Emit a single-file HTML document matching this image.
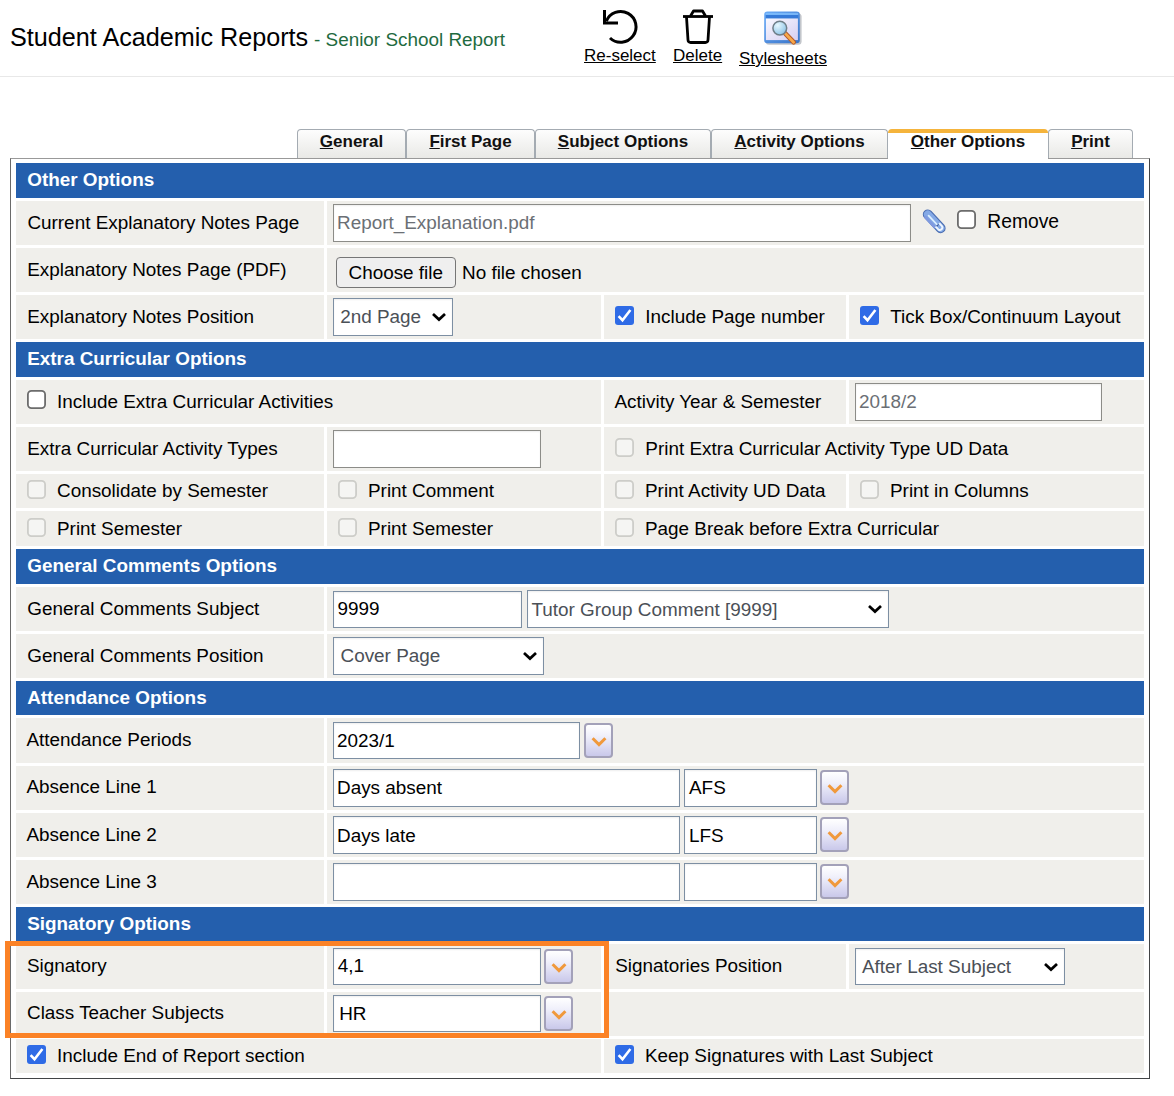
<!DOCTYPE html><html><head><meta charset="utf-8"><style>
html,body{margin:0;padding:0;background:#fff;width:1174px;height:1096px;overflow:hidden;position:relative;font-family:"Liberation Sans",sans-serif}
div,span,svg{position:absolute;box-sizing:content-box}
.t{white-space:nowrap}
.cb{width:17px;height:17px;border-radius:3px}
.cb.on{width:19px;height:19px;background:#2f6be6}
.cb.on svg{position:absolute;left:0;top:0}
.cb.off{border:2px solid #6f6f6f;background:#fff;width:15px;height:15px}
.cb.dis{border:2px solid #d2d2ce;background:#f5f5f3;width:15px;height:15px}
.inp{border:1px solid #7d8fa3;background:#fff;box-shadow:inset 0 1px 2px rgba(0,0,0,0.07)}
.btn{border:1px solid #767676;border-radius:4px;background:#efefef}
.dd{border:2px solid #a3a1b9;border-radius:4px;background:linear-gradient(#ffffff 0%,#f0f0fb 35%,#c9c8ea 100%)}
.tab{border:1px solid #a4abb2;border-bottom:none;border-radius:4px 4px 0 0;background:linear-gradient(#fdfdfd,#e9e9e6)}
.tab.act{border:none;border-top:4px solid #f5b43c;border-radius:4px 4px 0 0;background:#fff;height:26px}
</style></head><body>
<span class="t" style="left:10px;top:25px;font-size:25.2px;line-height:25.2px;font-weight:400;color:#000;">Student Academic Reports</span>
<span class="t" style="left:314px;top:31px;font-size:18.9px;line-height:18.9px;font-weight:400;color:#1f6b3f;">- Senior School Report</span>
<div style="left:0px;top:76px;width:1174px;height:1px;background:#e8e8e8;"></div>
<svg style="position:absolute;left:0;top:0" width="1174" height="76">
<path d="M604.5 10 V23 H618" fill="none" stroke="#000" stroke-width="3"/>
<path d="M606.3 21.2 A15.4 15.4 0 1 1 610 38" fill="none" stroke="#000" stroke-width="3"/>
<path d="M683 16.5 H713" stroke="#000" stroke-width="2.8"/>
<path d="M690.5 16 L693.5 11 H702.5 L705.5 16" fill="none" stroke="#000" stroke-width="2.8" stroke-linejoin="round"/>
<path d="M686.5 17 L688 40 Q688.2 42.5 690.7 42.5 H705.3 Q707.8 42.5 708 40 L709.5 17" fill="none" stroke="#000" stroke-width="2.8"/>
</svg>
<svg style="position:absolute;left:762px;top:10px" width="42" height="38" viewBox="0 0 42 38">
<defs><linearGradient id="gin" x1="0" y1="0" x2="1" y2="1"><stop offset="0" stop-color="#f8f8ff"/><stop offset="1" stop-color="#d6cff2"/></linearGradient>
<linearGradient id="gfr" x1="0" y1="0" x2="1" y2="1"><stop offset="0" stop-color="#6aacf8"/><stop offset="1" stop-color="#3a74c8"/></linearGradient>
<radialGradient id="lens" cx="0.35" cy="0.3" r="0.75"><stop offset="0" stop-color="#e6f8ff"/><stop offset="1" stop-color="#8cc2e6"/></radialGradient></defs>
<rect x="3.6" y="3.2" width="36" height="31.5" rx="3.5" fill="rgba(40,50,70,0.28)"/>
<rect x="2.2" y="1.6" width="35.6" height="31.6" rx="3.2" fill="url(#gfr)"/>
<rect x="3.8" y="3.3" width="32.4" height="1.6" fill="#86c4ff"/>
<rect x="3.8" y="4.9" width="32.4" height="3.6" fill="#357ad8"/>
<rect x="3.9" y="8.5" width="32" height="21.6" fill="url(#gin)"/>
<line x1="23.4" y1="23.6" x2="31.6" y2="32.2" stroke="#b35a2a" stroke-width="4.8" stroke-linecap="round"/>
<line x1="23.4" y1="23.6" x2="31.6" y2="32.2" stroke="#f7a84a" stroke-width="2.8" stroke-linecap="round"/>
<circle cx="17.8" cy="18.1" r="6.9" fill="url(#lens)" stroke="#6f7e88" stroke-width="1.5"/>
</svg>
<span class="t" style="left:584px;top:47px;font-size:17px;line-height:17px;font-weight:400;color:#000;text-decoration:underline;">Re-select</span>
<span class="t" style="left:673px;top:47px;font-size:17px;line-height:17px;font-weight:400;color:#000;text-decoration:underline;">Delete</span>
<span class="t" style="left:739px;top:50px;font-size:17px;line-height:17px;font-weight:400;color:#000;text-decoration:underline;">Stylesheets</span>
<div style="left:10px;top:158px;width:1138px;height:919px;border:1px solid;border-color:#999 #424446 #424446 #6a6a6a;background:#fff"></div>
<div class="tab" style="left:297px;top:129px;width:107px;height:28px"></div>
<span class="t" style="left:297px;width:109px;text-align:center;top:133px;font-size:17px;line-height:17px;font-weight:bold;color:#111"><u>G</u>eneral</span>
<div class="tab" style="left:406px;top:129px;width:127px;height:28px"></div>
<span class="t" style="left:406px;width:129px;text-align:center;top:133px;font-size:17px;line-height:17px;font-weight:bold;color:#111"><u>F</u>irst Page</span>
<div class="tab" style="left:535px;top:129px;width:174px;height:28px"></div>
<span class="t" style="left:535px;width:176px;text-align:center;top:133px;font-size:17px;line-height:17px;font-weight:bold;color:#111"><u>S</u>ubject Options</span>
<div class="tab" style="left:711px;top:129px;width:175px;height:28px"></div>
<span class="t" style="left:711px;width:177px;text-align:center;top:133px;font-size:17px;line-height:17px;font-weight:bold;color:#111"><u>A</u>ctivity Options</span>
<div class="tab act" style="left:888px;top:129px;width:160px;height:30px"></div>
<span class="t" style="left:888px;width:160px;text-align:center;top:133px;font-size:17px;line-height:17px;font-weight:bold;color:#111"><u>O</u>ther Options</span>
<div class="tab" style="left:1048px;top:129px;width:83px;height:28px"></div>
<span class="t" style="left:1048px;width:85px;text-align:center;top:133px;font-size:17px;line-height:17px;font-weight:bold;color:#111"><u>P</u>rint</span>
<div style="left:16px;top:163px;width:1128px;height:35px;background:#245fad;"></div>
<span class="t" style="left:27.2px;top:171px;font-size:18.9px;line-height:18.9px;font-weight:700;color:#fff;">Other Options</span>
<div style="left:16px;top:201px;width:308px;height:44px;background:#f0efeb;"></div>
<div style="left:327px;top:201px;width:817px;height:44px;background:#f0efeb;"></div>
<span class="t" style="left:27.4px;top:214px;font-size:18.9px;line-height:18.9px;font-weight:400;color:#000;">Current Explanatory Notes Page</span>
<div class="inp" style="left:333px;top:204px;width:576px;height:36px;border-color:#8c8c88"></div>
<span class="t" style="left:337px;top:214px;font-size:18.9px;line-height:18.9px;font-weight:400;color:#6b6f75;">Report_Explanation.pdf</span>
<svg style="position:absolute;left:920px;top:207px" width="30" height="30" viewBox="0 0 30 30">
<line x1="7.8" y1="7.4" x2="20.6" y2="21.2" stroke="#4a6db0" stroke-width="10" stroke-linecap="round"/>
<line x1="7.8" y1="7.4" x2="20.6" y2="21.2" stroke="#84a9e6" stroke-width="7.8" stroke-linecap="round"/>
<line x1="5.6" y1="10.2" x2="14.5" y2="19.8" stroke="#7f9ae0" stroke-width="3" stroke-linecap="round"/>
<line x1="8.6" y1="8.6" x2="17.4" y2="18" stroke="#dcefff" stroke-width="1.8" stroke-linecap="round"/>
<path d="M15.6 19.5 L18.3 22.4 A2.5 2.5 0 0 0 21.9 19.0 L19.2 16.1" fill="none" stroke="#eef6ff" stroke-width="1.9"/>
<path d="M18.6 17.4 L16.6 19.3" fill="none" stroke="#3d5c9c" stroke-width="1.3"/>
</svg>
<svg style="left:957px;top:210px" width="19" height="19"><rect x="0.9" y="0.9" width="17.2" height="17.2" rx="3.6" fill="#fff" stroke="#6c6c6c" stroke-width="1.8"/></svg>
<span class="t" style="left:987.3px;top:212px;font-size:19.3px;line-height:19.3px;font-weight:400;color:#000;">Remove</span>
<div style="left:16px;top:248px;width:308px;height:44px;background:#f0efeb;"></div>
<div style="left:327px;top:248px;width:817px;height:44px;background:#f0efeb;"></div>
<span class="t" style="left:27.2px;top:261px;font-size:18.9px;line-height:18.9px;font-weight:400;color:#000;">Explanatory Notes Page (PDF)</span>
<div class="btn" style="left:336px;top:257px;width:118px;height:29px"></div>
<span class="t" style="left:348.5px;top:264px;font-size:18.9px;line-height:18.9px;font-weight:400;color:#000;">Choose file</span>
<span class="t" style="left:462px;top:264px;font-size:18.9px;line-height:18.9px;font-weight:400;color:#000;">No file chosen</span>
<div style="left:16px;top:295px;width:308px;height:44px;background:#f0efeb;"></div>
<div style="left:327px;top:295px;width:274px;height:44px;background:#f0efeb;"></div>
<div style="left:604px;top:295px;width:242px;height:44px;background:#f0efeb;"></div>
<div style="left:849px;top:295px;width:295px;height:44px;background:#f0efeb;"></div>
<span class="t" style="left:27.2px;top:308px;font-size:18.9px;line-height:18.9px;font-weight:400;color:#000;">Explanatory Notes Position</span>
<div class="inp" style="left:333px;top:298px;width:118px;height:36px;border-color:#7d8fa3"></div>
<span class="t" style="left:340.2px;top:308px;font-size:18.9px;line-height:18.9px;font-weight:400;color:#4b5057;">2nd Page</span>
<svg style="position:absolute;left:429.5px;top:311.2px" width="18" height="11.6"><path d="M3 3 L9.0 8.6 L15 3" fill="none" stroke="#000" stroke-width="2.7"/></svg>
<div class="cb on" style="left:615px;top:306px"><svg width="19" height="19" viewBox="0 0 19 19"><path d="M3.6 10.2 L7.5 14.2 L15.4 4" fill="none" stroke="#fff" stroke-width="2.6"/></svg></div>
<span class="t" style="left:645.3px;top:308px;font-size:18.9px;line-height:18.9px;font-weight:400;color:#000;">Include Page number</span>
<div class="cb on" style="left:860px;top:306px"><svg width="19" height="19" viewBox="0 0 19 19"><path d="M3.6 10.2 L7.5 14.2 L15.4 4" fill="none" stroke="#fff" stroke-width="2.6"/></svg></div>
<span class="t" style="left:890.2px;top:308px;font-size:18.9px;line-height:18.9px;font-weight:400;color:#000;">Tick Box/Continuum Layout</span>
<div style="left:16px;top:342px;width:1128px;height:35px;background:#245fad;"></div>
<span class="t" style="left:27.2px;top:350px;font-size:18.9px;line-height:18.9px;font-weight:700;color:#fff;">Extra Curricular Options</span>
<div style="left:16px;top:380px;width:585px;height:44px;background:#f0efeb;"></div>
<div style="left:604px;top:380px;width:242px;height:44px;background:#f0efeb;"></div>
<div style="left:849px;top:380px;width:295px;height:44px;background:#f0efeb;"></div>
<svg style="left:27px;top:390px" width="19" height="19"><rect x="0.9" y="0.9" width="17.2" height="17.2" rx="3.6" fill="#fff" stroke="#6c6c6c" stroke-width="1.8"/></svg>
<span class="t" style="left:57px;top:393px;font-size:18.9px;line-height:18.9px;font-weight:400;color:#000;">Include Extra Curricular Activities</span>
<span class="t" style="left:614.5px;top:393px;font-size:18.9px;line-height:18.9px;font-weight:400;color:#000;">Activity Year &amp; Semester</span>
<div class="inp" style="left:855px;top:383px;width:245px;height:36px;border-color:#8c8c88"></div>
<span class="t" style="left:859px;top:393px;font-size:18.9px;line-height:18.9px;font-weight:400;color:#6b6f75;">2018/2</span>
<div style="left:16px;top:427px;width:308px;height:44px;background:#f0efeb;"></div>
<div style="left:327px;top:427px;width:274px;height:44px;background:#f0efeb;"></div>
<div style="left:604px;top:427px;width:540px;height:44px;background:#f0efeb;"></div>
<span class="t" style="left:27.2px;top:440px;font-size:18.9px;line-height:18.9px;font-weight:400;color:#000;">Extra Curricular Activity Types</span>
<div class="inp" style="left:333px;top:430px;width:206px;height:36px;border-color:#8c8c88"></div>
<svg style="left:615px;top:438px" width="19" height="19"><rect x="0.9" y="0.9" width="17.2" height="17.2" rx="3.6" fill="#f5f5f3" stroke="#cdcdc9" stroke-width="1.8"/></svg>
<span class="t" style="left:645.3px;top:440px;font-size:18.9px;line-height:18.9px;font-weight:400;color:#000;">Print Extra Curricular Activity Type UD Data</span>
<div style="left:16px;top:474px;width:308px;height:34px;background:#f0efeb;"></div>
<div style="left:327px;top:474px;width:274px;height:34px;background:#f0efeb;"></div>
<div style="left:604px;top:474px;width:242px;height:34px;background:#f0efeb;"></div>
<div style="left:849px;top:474px;width:295px;height:34px;background:#f0efeb;"></div>
<svg style="left:27px;top:480px" width="19" height="19"><rect x="0.9" y="0.9" width="17.2" height="17.2" rx="3.6" fill="#f5f5f3" stroke="#cdcdc9" stroke-width="1.8"/></svg>
<span class="t" style="left:57px;top:482px;font-size:18.9px;line-height:18.9px;font-weight:400;color:#000;">Consolidate by Semester</span>
<svg style="left:338px;top:480px" width="19" height="19"><rect x="0.9" y="0.9" width="17.2" height="17.2" rx="3.6" fill="#f5f5f3" stroke="#cdcdc9" stroke-width="1.8"/></svg>
<span class="t" style="left:368px;top:482px;font-size:18.9px;line-height:18.9px;font-weight:400;color:#000;">Print Comment</span>
<svg style="left:615px;top:480px" width="19" height="19"><rect x="0.9" y="0.9" width="17.2" height="17.2" rx="3.6" fill="#f5f5f3" stroke="#cdcdc9" stroke-width="1.8"/></svg>
<span class="t" style="left:645px;top:482px;font-size:18.9px;line-height:18.9px;font-weight:400;color:#000;">Print Activity UD Data</span>
<svg style="left:860px;top:480px" width="19" height="19"><rect x="0.9" y="0.9" width="17.2" height="17.2" rx="3.6" fill="#f5f5f3" stroke="#cdcdc9" stroke-width="1.8"/></svg>
<span class="t" style="left:890px;top:482px;font-size:18.9px;line-height:18.9px;font-weight:400;color:#000;">Print in Columns</span>
<div style="left:16px;top:511px;width:308px;height:35px;background:#f0efeb;"></div>
<div style="left:327px;top:511px;width:274px;height:35px;background:#f0efeb;"></div>
<div style="left:604px;top:511px;width:540px;height:35px;background:#f0efeb;"></div>
<svg style="left:27px;top:518px" width="19" height="19"><rect x="0.9" y="0.9" width="17.2" height="17.2" rx="3.6" fill="#f5f5f3" stroke="#cdcdc9" stroke-width="1.8"/></svg>
<span class="t" style="left:57px;top:520px;font-size:18.9px;line-height:18.9px;font-weight:400;color:#000;">Print Semester</span>
<svg style="left:338px;top:518px" width="19" height="19"><rect x="0.9" y="0.9" width="17.2" height="17.2" rx="3.6" fill="#f5f5f3" stroke="#cdcdc9" stroke-width="1.8"/></svg>
<span class="t" style="left:368px;top:520px;font-size:18.9px;line-height:18.9px;font-weight:400;color:#000;">Print Semester</span>
<svg style="left:615px;top:518px" width="19" height="19"><rect x="0.9" y="0.9" width="17.2" height="17.2" rx="3.6" fill="#f5f5f3" stroke="#cdcdc9" stroke-width="1.8"/></svg>
<span class="t" style="left:645px;top:520px;font-size:18.9px;line-height:18.9px;font-weight:400;color:#000;">Page Break before Extra Curricular</span>
<div style="left:16px;top:549px;width:1128px;height:35px;background:#245fad;"></div>
<span class="t" style="left:27.2px;top:557px;font-size:18.9px;line-height:18.9px;font-weight:700;color:#fff;">General Comments Options</span>
<div style="left:16px;top:587px;width:308px;height:44px;background:#f0efeb;"></div>
<div style="left:327px;top:587px;width:817px;height:44px;background:#f0efeb;"></div>
<span class="t" style="left:27.3px;top:600px;font-size:18.9px;line-height:18.9px;font-weight:400;color:#000;">General Comments Subject</span>
<div class="inp" style="left:333px;top:591px;width:187px;height:35px;border-color:#7d8fa3"></div>
<span class="t" style="left:337.4px;top:600px;font-size:18.9px;line-height:18.9px;font-weight:400;color:#000;">9999</span>
<div class="inp" style="left:527px;top:590px;width:360px;height:36px;border-color:#7d8fa3"></div>
<span class="t" style="left:531.4px;top:601px;font-size:18.9px;line-height:18.9px;font-weight:400;color:#4b5057;">Tutor Group Comment [9999]</span>
<svg style="position:absolute;left:865.5px;top:603.2px" width="18" height="11.6"><path d="M3 3 L9.0 8.6 L15 3" fill="none" stroke="#000" stroke-width="2.7"/></svg>
<div style="left:16px;top:634px;width:308px;height:44px;background:#f0efeb;"></div>
<div style="left:327px;top:634px;width:817px;height:44px;background:#f0efeb;"></div>
<span class="t" style="left:27.3px;top:647px;font-size:18.9px;line-height:18.9px;font-weight:400;color:#000;">General Comments Position</span>
<div class="inp" style="left:333px;top:637px;width:209px;height:36px;border-color:#7d8fa3"></div>
<span class="t" style="left:340.5px;top:647px;font-size:18.9px;line-height:18.9px;font-weight:400;color:#4b5057;">Cover Page</span>
<svg style="position:absolute;left:520.5px;top:650.2px" width="18" height="11.6"><path d="M3 3 L9.0 8.6 L15 3" fill="none" stroke="#000" stroke-width="2.7"/></svg>
<div style="left:16px;top:681px;width:1128px;height:34px;background:#245fad;"></div>
<span class="t" style="left:27.2px;top:689px;font-size:18.9px;line-height:18.9px;font-weight:700;color:#fff;">Attendance Options</span>
<div style="left:16px;top:718px;width:308px;height:45px;background:#f0efeb;"></div>
<div style="left:327px;top:718px;width:817px;height:45px;background:#f0efeb;"></div>
<span class="t" style="left:26.5px;top:731px;font-size:18.9px;line-height:18.9px;font-weight:400;color:#000;">Attendance Periods</span>
<div class="inp" style="left:333px;top:722px;width:245px;height:35px;border-color:#7d8fa3"></div>
<span class="t" style="left:337px;top:732px;font-size:18.9px;line-height:18.9px;font-weight:400;color:#000;">2023/1</span>
<div class="dd" style="left:584px;top:723px;width:25px;height:31px"></div>
<svg style="position:absolute;left:588.5px;top:732.5px" width="20" height="16"><path d="M3.6 5.2 L10 11.6 L16.4 5.2" fill="none" stroke="#f0993c" stroke-width="3"/></svg>
<div style="left:16px;top:766px;width:308px;height:44px;background:#f0efeb;"></div>
<div style="left:327px;top:766px;width:817px;height:44px;background:#f0efeb;"></div>
<span class="t" style="left:26.5px;top:778px;font-size:18.9px;line-height:18.9px;font-weight:400;color:#000;">Absence Line 1</span>
<div class="inp" style="left:333px;top:769px;width:345px;height:36px;border-color:#7d8fa3"></div>
<span class="t" style="left:337px;top:779px;font-size:18.9px;line-height:18.9px;font-weight:400;color:#000;">Days absent</span>
<div class="inp" style="left:684px;top:769px;width:131px;height:36px;border-color:#7d8fa3"></div>
<span class="t" style="left:689px;top:779px;font-size:18.9px;line-height:18.9px;font-weight:400;color:#000;">AFS</span>
<div class="dd" style="left:820px;top:770px;width:25px;height:31px"></div>
<svg style="position:absolute;left:824.5px;top:779.5px" width="20" height="16"><path d="M3.6 5.2 L10 11.6 L16.4 5.2" fill="none" stroke="#f0993c" stroke-width="3"/></svg>
<div style="left:16px;top:813px;width:308px;height:44px;background:#f0efeb;"></div>
<div style="left:327px;top:813px;width:817px;height:44px;background:#f0efeb;"></div>
<span class="t" style="left:26.5px;top:826px;font-size:18.9px;line-height:18.9px;font-weight:400;color:#000;">Absence Line 2</span>
<div class="inp" style="left:333px;top:816px;width:345px;height:36px;border-color:#7d8fa3"></div>
<span class="t" style="left:337px;top:827px;font-size:18.9px;line-height:18.9px;font-weight:400;color:#000;">Days late</span>
<div class="inp" style="left:684px;top:816px;width:131px;height:36px;border-color:#7d8fa3"></div>
<span class="t" style="left:689px;top:827px;font-size:18.9px;line-height:18.9px;font-weight:400;color:#000;">LFS</span>
<div class="dd" style="left:820px;top:817px;width:25px;height:31px"></div>
<svg style="position:absolute;left:824.5px;top:826.5px" width="20" height="16"><path d="M3.6 5.2 L10 11.6 L16.4 5.2" fill="none" stroke="#f0993c" stroke-width="3"/></svg>
<div style="left:16px;top:860px;width:308px;height:44px;background:#f0efeb;"></div>
<div style="left:327px;top:860px;width:817px;height:44px;background:#f0efeb;"></div>
<span class="t" style="left:26.5px;top:873px;font-size:18.9px;line-height:18.9px;font-weight:400;color:#000;">Absence Line 3</span>
<div class="inp" style="left:333px;top:863px;width:345px;height:36px;border-color:#7d8fa3"></div>
<div class="inp" style="left:684px;top:863px;width:131px;height:36px;border-color:#7d8fa3"></div>
<div class="dd" style="left:820px;top:864px;width:25px;height:31px"></div>
<svg style="position:absolute;left:824.5px;top:873.5px" width="20" height="16"><path d="M3.6 5.2 L10 11.6 L16.4 5.2" fill="none" stroke="#f0993c" stroke-width="3"/></svg>
<div style="left:16px;top:907px;width:1128px;height:34px;background:#245fad;"></div>
<span class="t" style="left:27.2px;top:915px;font-size:18.9px;line-height:18.9px;font-weight:700;color:#fff;">Signatory Options</span>
<div style="left:16px;top:944px;width:308px;height:45px;background:#f0efeb;"></div>
<div style="left:327px;top:944px;width:274px;height:45px;background:#f0efeb;"></div>
<div style="left:604px;top:944px;width:242px;height:45px;background:#f0efeb;"></div>
<div style="left:849px;top:944px;width:295px;height:45px;background:#f0efeb;"></div>
<span class="t" style="left:27px;top:957px;font-size:18.9px;line-height:18.9px;font-weight:400;color:#000;">Signatory</span>
<div class="inp" style="left:333px;top:948px;width:206px;height:35px;border-color:#7d8fa3"></div>
<span class="t" style="left:337.7px;top:957px;font-size:18.9px;line-height:18.9px;font-weight:400;color:#000;">4,1</span>
<div class="dd" style="left:544px;top:949px;width:25px;height:31px"></div>
<svg style="position:absolute;left:548.5px;top:958.5px" width="20" height="16"><path d="M3.6 5.2 L10 11.6 L16.4 5.2" fill="none" stroke="#f0993c" stroke-width="3"/></svg>
<span class="t" style="left:615.2px;top:957px;font-size:18.9px;line-height:18.9px;font-weight:400;color:#000;">Signatories Position</span>
<div class="inp" style="left:855px;top:948px;width:208px;height:35px;border-color:#7d8fa3"></div>
<span class="t" style="left:862px;top:958px;font-size:18.9px;line-height:18.9px;font-weight:400;color:#4b5057;">After Last Subject</span>
<svg style="position:absolute;left:1041.5px;top:960.7px" width="18" height="11.6"><path d="M3 3 L9.0 8.6 L15 3" fill="none" stroke="#000" stroke-width="2.7"/></svg>
<div style="left:16px;top:992px;width:308px;height:44px;background:#f0efeb;"></div>
<div style="left:327px;top:992px;width:274px;height:44px;background:#f0efeb;"></div>
<div style="left:604px;top:992px;width:540px;height:44px;background:#f0efeb;"></div>
<span class="t" style="left:27px;top:1004px;font-size:18.9px;line-height:18.9px;font-weight:400;color:#000;">Class Teacher Subjects</span>
<div class="inp" style="left:333px;top:995px;width:206px;height:35px;border-color:#7d8fa3"></div>
<span class="t" style="left:339.2px;top:1005px;font-size:18.9px;line-height:18.9px;font-weight:400;color:#000;">HR</span>
<div class="dd" style="left:544px;top:996px;width:25px;height:31px"></div>
<svg style="position:absolute;left:548.5px;top:1005.5px" width="20" height="16"><path d="M3.6 5.2 L10 11.6 L16.4 5.2" fill="none" stroke="#f0993c" stroke-width="3"/></svg>
<div style="left:16px;top:1039px;width:585px;height:34px;background:#f0efeb;"></div>
<div style="left:604px;top:1039px;width:540px;height:34px;background:#f0efeb;"></div>
<div class="cb on" style="left:27px;top:1045px"><svg width="19" height="19" viewBox="0 0 19 19"><path d="M3.6 10.2 L7.5 14.2 L15.4 4" fill="none" stroke="#fff" stroke-width="2.6"/></svg></div>
<span class="t" style="left:57px;top:1047px;font-size:18.9px;line-height:18.9px;font-weight:400;color:#000;">Include End of Report section</span>
<div class="cb on" style="left:615px;top:1045px"><svg width="19" height="19" viewBox="0 0 19 19"><path d="M3.6 10.2 L7.5 14.2 L15.4 4" fill="none" stroke="#fff" stroke-width="2.6"/></svg></div>
<span class="t" style="left:645px;top:1047px;font-size:18.9px;line-height:18.9px;font-weight:400;color:#000;">Keep Signatures with Last Subject</span>
<div style="left:5px;top:941px;width:594px;height:87px;border:5px solid #fb8226;background:transparent"></div>
</body></html>
